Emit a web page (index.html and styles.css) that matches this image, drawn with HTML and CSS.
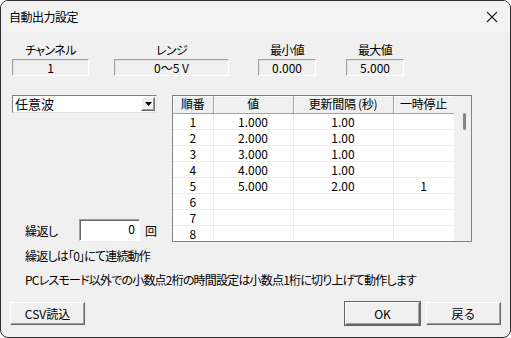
FILE: index.html
```html
<!DOCTYPE html>
<html lang="ja">
<head>
  <meta charset="UTF-8">
  <title>自動出力設定</title>
  <link rel="stylesheet" href="styles.css">
</head>
<body>
  <div class="window">
    <div class="titlebar">
      <span class="title">自動出力設定</span>
      <svg class="close" width="12" height="12" viewBox="0 0 12 12"><path d="M1 1L11 11M11 1L1 11" stroke="#222" stroke-width="1.1"/></svg>
    </div>

    <div class="content">
      <div class="readouts">
        <div class="readout ch"><div class="label">チャンネル</div><div class="box">1</div></div>
        <div class="readout range"><div class="label">レンジ</div><div class="box">0～5 V</div></div>
        <div class="readout min"><div class="label">最小値</div><div class="box">0.000</div></div>
        <div class="readout max"><div class="label">最大値</div><div class="box">5.000</div></div>
      </div>

      <div class="middle">
        <div class="left">
          <div class="combo">
            <span class="combo-text">任意波</span>
            <span class="combo-btn"><svg width="7" height="4" viewBox="0 0 7 4"><path d="M0 0H7L3.5 4Z" fill="#000"/></svg></span>
          </div>
          <div class="repeat">
            <span class="repeat-label">繰返し</span>
            <div class="input">0</div>
            <span class="unit">回</span>
          </div>
        </div>

        <div class="grid">
          <div class="grid-body">
            <table>
              <thead>
                <tr><th class="c1">順番</th><th class="c2">値</th><th class="c3">更新間隔 (秒)</th><th class="c4">一時停止</th></tr>
              </thead>
              <tbody id="rows"></tbody>
            </table>
          </div>
          <div class="scrollbar"><div class="thumb"></div></div>
        </div>
      </div>

      <p class="note first">繰返しは「0」にて連続動作</p>
      <p class="note">PCレスモード以外での小数点2桁の時間設定は小数点1桁に切り上げて動作します</p>

      <div class="buttons">
        <button class="btn">CSV読込</button>
        <span class="spacer"></span>
        <button class="btn default">OK</button>
        <button class="btn">戻る</button>
      </div>
    </div>
  </div>

  <script>
    const rows = [
      ["1", "1.000", "1.00", ""],
      ["2", "2.000", "1.00", ""],
      ["3", "3.000", "1.00", ""],
      ["4", "4.000", "1.00", ""],
      ["5", "5.000", "2.00", "1"],
      ["6", "", "", ""],
      ["7", "", "", ""],
      ["8", "", "", ""]
    ];
    const tbody = document.getElementById("rows");
    rows.forEach(r => {
      tbody.innerHTML += `<tr><td>${r[0]}</td><td>${r[1]}</td><td>${r[2]}</td><td>${r[3]}</td></tr>`;
    });
  </script>
</body>
</html>
```
FILE: styles.css
```css
* {
  box-sizing: border-box;
}
body {
  margin: 0;
  background: #fff;
  font-family: "Noto Sans CJK JP", "Noto Sans", sans-serif;
  font-size: 12px;
  color: #000;
  font-feature-settings: "palt";
}
.window {
  width: 511px;
  height: 338px;
  border: 1px solid #2e2e2e;
  border-radius: 8px;
  background: #f0f0f0;
  overflow: hidden;
}
.titlebar {
  height: 31px;
  display: flex;
  align-items: center;
  justify-content: space-between;
  padding: 0 12px 0 8px;
  background: #f3f3f3;
}
.title {
  font-size: 12px;
  letter-spacing: -0.5px;
}
.content {
  padding: 10px 11px 0 11px;
}
.readouts {
  display: flex;
  align-items: flex-end;
}
.readout .label {
  text-align: center;
  line-height: 16px;
  margin-bottom: 1px;
  letter-spacing: -0.6px;
}
.readout .box {
  height: 17px;
  line-height: 15px;
  text-align: center;
  border: 1px solid #a0a0a0;
  border-right-color: #fff;
  border-bottom-color: #fff;
  box-shadow: inset 1px 1px 0 #e3e3e3;
}
.ch { width: 77px; margin-right: 25px; }
.range { width: 115px; margin-right: 29px; }
.min { width: 58px; margin-right: 30px; }
.max { width: 58px; }
.middle {
  display: flex;
  margin-top: 19px;
  height: 147px;
}
.left {
  width: 160px;
  display: flex;
  flex-direction: column;
  justify-content: space-between;
}
.combo {
  width: 145px;
  height: 18px;
  display: flex;
  align-items: center;
  background: #fff;
  border: 1px solid #828282;
  border-right-color: #e3e3e3;
  border-bottom-color: #e3e3e3;
}
.combo-text {
  flex: 1;
  padding-left: 2px;
  font-size: 13px;
  line-height: 16px;
}
.combo-btn {
  width: 14px;
  height: 14px;
  margin-right: 1px;
  display: flex;
  align-items: center;
  justify-content: center;
  background: #f0f0f0;
  border: 1px solid #fff;
  border-right-color: #696969;
  border-bottom-color: #696969;
  box-shadow: inset -1px -1px 0 #a0a0a0;
}
.repeat {
  display: flex;
  align-items: center;
  margin-bottom: 1px;
}
.repeat-label {
  width: 67px;
  padding-left: 13px;
  letter-spacing: -0.5px;
}
.input {
  width: 61px;
  height: 22px;
  background: #fff;
  text-align: right;
  padding-right: 4px;
  line-height: 18px;
  border: 1px solid #a0a0a0;
  border-right-color: #fff;
  border-bottom-color: #fff;
  box-shadow: inset 1px 1px 0 #696969;
}
.unit {
  margin-left: 5px;
}
.grid {
  width: 300px;
  height: 147px;
  display: flex;
  border: 1px solid #828282;
  background: #fff;
  overflow: hidden;
}
.grid-body {
  width: 281px;
  overflow: hidden;
}
table {
  border-collapse: collapse;
  table-layout: fixed;
  width: 281px;
}
th {
  height: 17px;
  padding: 0;
  font-weight: normal;
  background: #f0f0f0;
  border-right: 1px solid #a0a0a0;
  border-bottom: 1px solid #a0a0a0;
  box-shadow: inset 1px 1px 0 #fff;
  line-height: 16px;
  letter-spacing: -0.3px;
}
.c1 { width: 40px; }
.c2 { width: 80px; }
.c3 { width: 100px; }
.c4 { width: 61px; }
td {
  height: 16px;
  padding: 0;
  text-align: center;
  line-height: 15px;
  border-right: 1px solid #ececec;
  border-bottom: 1px solid #ececec;
}
.scrollbar {
  flex: 1;
  background: #f0f0f0;
  position: relative;
}
.thumb {
  position: absolute;
  left: 9px;
  top: 17px;
  width: 3px;
  height: 17px;
  border-radius: 2px;
  background: #858585;
}
.note {
  margin: 0;
  padding-left: 13px;
  line-height: 24px;
  letter-spacing: -0.8px;
}
.note.first {
  margin-top: 2px;
}
.buttons {
  display: flex;
  margin: 10px -2px 0 -2px;
}
.spacer {
  flex: 1;
}
.btn {
  width: 75px;
  height: 23px;
  margin-left: 6px;
  font-family: inherit;
  font-size: 12px;
  background: #f0f0f0;
  border: 1px solid #fff;
  border-right-color: #696969;
  border-bottom-color: #696969;
  box-shadow: inset -1px -1px 0 #a0a0a0;
  padding: 0;
}
.btn:first-child {
  margin-left: 0;
}
.btn.default {
  outline: 1px solid #646464;
}
```
